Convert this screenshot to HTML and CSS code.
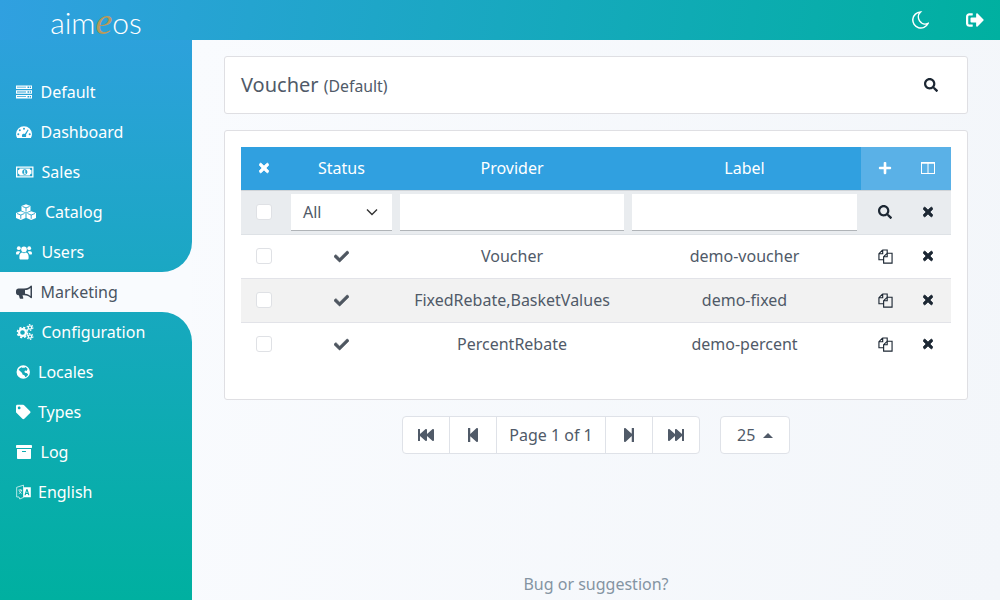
FILE: index.html
```html
<!DOCTYPE html>
<html lang="en">
<head>
<meta charset="utf-8">
<title>Voucher</title>
<link rel="stylesheet" href="styles.css">
</head>
<body>
<header class="topbar">
  <div class="logo">aim<span class="logo-e">e</span>os</div>
  <div class="top-actions">
    <svg class="top-ico" viewBox="0 0 18 18"><path class="moon" d="M9.500 1A8 8 0 1 0 17 12.500 7 7 0 0 1 9.500 1z"/></svg>
    <svg class="top-ico" viewBox="0 0 512 512"><path d="M497 273L329 441c-15 15-41 4.500-41-17v-96H152c-13.300 0-24-10.700-24-24v-96c0-13.300 10.700-24 24-24h136V88c0-21.400 25.900-32 41-17l168 168c9.300 9.400 9.300 24.600 0 34zM192 436v-40c0-6.600-5.400-12-12-12H96c-17.700 0-32-14.300-32-32V160c0-17.700 14.300-32 32-32h84c6.600 0 12-5.400 12-12V76c0-6.600-5.400-12-12-12H96c-53 0-96 43-96 96v192c0 53 43 96 96 96h84c6.600 0 12-5.400 12-12z"/></svg>
  </div>
</header>
<div class="shell">
  <nav class="sidebar">
    <div class="nav-top">
      <a class="nav-item"><span class="nav-ico w25"><svg viewBox="0 0 16 16"><path fill-rule="evenodd" d="M0 1.500h16v3.600H0zM11.500 2.600h1.500v1.400h-1.500zM13.700 2.600h1.300v1.400h-1.300zM1 2.800h9v.8H1zM0 6.200h16v3.600H0zM11.500 7.300h1.500v1.400h-1.500zM13.700 7.300h1.300v1.400h-1.300zM1 7.600h9v.8H1zM0 10.900h16v3.600H0zM11.500 12h1.500v1.400h-1.500zM13.700 12h1.300v1.400h-1.300zM1 12.300h9v.8H1z"/></svg></span>Default</a>
      <a class="nav-item"><span class="nav-ico w25"><svg viewBox="0 0 16 16"><path fill-rule="evenodd" d="M8 2.200A8 8 0 0 0 0 10c0 1.500.4 2.800 1.100 4h13.800c.7-1.200 1.100-2.500 1.100-4a8 8 0 0 0-8-7.800zM8 3.800a1 1 0 1 1 0 2 1 1 0 0 1 0-2zM3.800 5.300a1 1 0 1 1 0 2 1 1 0 0 1 0-2zM2.300 9.300a1 1 0 1 1 0 2 1 1 0 0 1 0-2zM13.700 9.300a1 1 0 1 1 0 2 1 1 0 0 1 0-2zM11.700 5.600l.9.500-2.600 4.600c.4.700.3 1.500-.1 2.300H6.300c-.6-1-.5-2.300.5-3 .7-.4 1.400-.4 2 0z"/></svg></span>Dashboard</a>
      <a class="nav-item"><span class="nav-ico w26"><svg viewBox="0 0 18 16" class="wide"><path fill-rule="evenodd" d="M0 2.500h17.500v11H0zM1.300 3.800v8.400h14.900V3.800zM3.600 4.600h10.300c0 1 .7 1.700 1.600 1.700v3.400c-.9 0-1.600.7-1.600 1.700H3.600c0-1-.7-1.700-1.600-1.700V6.300c.9 0 1.600-.7 1.600-1.700zM8.800 5.200C7.300 5.200 6.200 6.400 6.200 8s1.100 2.800 2.600 2.800 2.600-1.200 2.600-2.800-1.100-2.800-2.600-2.800zM8.200 6.300h1.100v2.700h.6v.8H7.700V9h.5V7.200h-.4z"/></svg></span>Sales</a>
      <a class="nav-item"><span class="nav-ico w29"><svg viewBox="0 0 20 16" class="wider"><path d="M10 .3l4.500 1.700v4.700L10 8.500 5.500 6.700V2z"/><path d="M4.800 7.200l4.700 1.800v5L4.800 16 0 14V9z"/><path d="M15.200 7.200L20 9v5l-4.800 2-4.700-2V9z"/><path class="cut-top" d="M6.500 2.500L10 3.900l3.500-1.400M10 3.900v3.600M1 9.500l3.800 1.500 3.700-1.500M4.800 11v3.800M11.500 9.500l3.700 1.500L19 9.500M15.200 11v3.800"/></svg></span>Catalog</a>
      <a class="nav-item"><span class="nav-ico w26"><svg viewBox="0 0 16 16"><circle cx="2.800" cy="4.200" r="1.900"/><circle cx="13.200" cy="4.200" r="1.900"/><circle cx="8" cy="5.400" r="2.800"/><path d="M0 9.300c0-1.300.7-2.100 1.900-2.100h1.500l.8.700c-.9.600-1.500 1.500-1.700 2.700H.8C.3 10.600 0 10 0 9.300zM16 9.300c0-1.300-.7-2.100-1.900-2.100h-1.500l-.8.700c.9.600 1.500 1.500 1.700 2.700h1.700c.5 0 .8-.6.800-1.300zM3.400 14.200v-1.700c0-2 1.200-3.900 2.900-3.900.6.200 1 .7 1.700.7s1.100-.5 1.700-.7c1.700 0 2.900 1.900 2.900 3.900v1.700c0 .8-.6 1.300-1.300 1.300H4.700c-.7 0-1.300-.5-1.300-1.300z"/></svg></span>Users</a>
    </div>
    <div class="nav-current">
      <a class="nav-item active"><span class="nav-ico w25"><svg viewBox="0 0 16 16"><path fill-rule="evenodd" d="M15.200 1.500c-.4 0-.7.300-.8.500C13 3.400 11.500 4.500 8 4.500H2.500C1.100 4.500 0 5.600 0 7v1.800c0 1.400 1.100 2.400 2.500 2.400h.4l.8 3.100c.1.300.4.500.7.500h2.200c.5 0 .8-.5.700-.9l-.8-2.700H8c3.500 0 5 1.100 6.400 2.500.2.200.5.500.8.500.5 0 .8-.4.800-.8V2.300c0-.5-.3-.8-.8-.8zM14.500 3.900v8c-1.400-1.100-3-1.900-5.500-2.200V6.100c2.500-.3 4.100-1.100 5.500-2.200z"/></svg></span>Marketing</a>
    </div>
    <div class="nav-bottom">
      <a class="nav-item"><span class="nav-ico w26"><svg viewBox="0 0 17 16" class="wide"><circle class="gear" cx="6" cy="8.500" r="3.400"/><circle class="gear-teeth" cx="6" cy="8.500" r="5"/><circle class="gear-s" cx="13.500" cy="3.500" r="1.700"/><circle class="gear-s-teeth" cx="13.500" cy="3.500" r="2.900"/><circle class="gear-s" cx="13.500" cy="12.500" r="1.700"/><circle class="gear-s-teeth" cx="13.500" cy="12.500" r="2.900"/></svg></span>Configuration</a>
      <a class="nav-item"><span class="nav-ico w22"><svg viewBox="0 0 16 16" class="narrow"><path fill-rule="evenodd" d="M8 .6a7.400 7.400 0 1 0 0 14.800A7.400 7.400 0 0 0 8 .6zM10.200 2.600c.8.300 2 1 2.700 2l-.6.900-.4 1.400-1.300-.5-1.300.6.500 1.800 1.800.4 1.100.8.600 1.100c-.6 1.200-1.700 2.200-3 2.700l-.6-1.700-1.100-.9-1.400-.5-.5-1.500L5.300 7.600 3.500 6l-.7-.3c.7-1.300 2-2.500 3.400-3l1 .8.500-.6L9 3.600z"/></svg></span>Locales</a>
      <a class="nav-item"><span class="nav-ico w22"><svg viewBox="0 0 512 512" class="narrow"><path d="M0 252.118V48C0 21.490 21.490 0 48 0h204.118a48 48 0 0 1 33.941 14.059l211.882 211.882c18.745 18.745 18.745 49.137 0 67.882L293.823 497.941c-18.745 18.745-49.137 18.745-67.882 0L14.059 286.059A48 48 0 0 1 0 252.118zM112 64c-26.510 0-48 21.490-48 48s21.490 48 48 48 48-21.490 48-48-21.490-48-48-48z"/></svg></span>Types</a>
      <a class="nav-item"><span class="nav-ico w25"><svg viewBox="0 0 512 512"><path d="M32 448c0 17.700 14.300 32 32 32h384c17.700 0 32-14.300 32-32V160H32v288zm160-212c0-6.600 5.400-12 12-12h104c6.600 0 12 5.400 12 12v8c0 6.600-5.400 12-12 12H204c-6.600 0-12-5.400-12-12v-8zM480 32H32C14.300 32 0 46.300 0 64v48c0 8.800 7.200 16 16 16h480c8.800 0 16-7.200 16-16V64c0-17.700-14.300-32-32-32z"/></svg></span>Log</a>
      <a class="nav-item"><span class="nav-ico w22"><svg viewBox="0 0 16 16" class="lang"><path class="lang-back" d="M.7 3L8 .7v13l-4 1.800-.8-2.200H.7zM2.500 6h4M4.500 5v1M3 9.800c1.500-.5 2.500-2 3-3.800M3.500 7c.5 1.200 1.500 2.200 2.500 2.800"/><path fill-rule="evenodd" d="M8 2.800h7.800v10.700H8zM10.900 5h1.500l1.900 6.500h-1.300l-.4-1.400h-1.900l-.4 1.400H9zM11.600 6.800l-.6 2.200h1.300z"/></svg></span>English</a>
    </div>
  </nav>
  <main class="content">
    <section class="card title-card">
      <h1 class="page-title">Voucher <small class="site">(Default)</small></h1>
      <button class="icon-btn"><svg class="ico-s dark" viewBox="0 0 512 512"><use href="#s"/></svg></button>
    </section>
    <section class="card list-card">
      <table class="list">
        <colgroup><col class="c-check"><col class="c-status"><col class="c-provider"><col class="c-label"><col class="c-act"><col class="c-act"></colgroup>
        <thead>
          <tr class="head">
            <th><svg class="ico-x white" viewBox="0 0 352 512"><use href="#x"/></svg></th>
            <th>Status</th><th>Provider</th><th>Label</th>
            <th class="act act-a"><svg class="ico-s white" viewBox="0 0 448 512"><path d="M416 208H272V64c0-17.670-14.330-32-32-32h-32c-17.670 0-32 14.330-32 32v144H32c-17.670 0-32 14.330-32 32v32c0 17.670 14.330 32 32 32h144v144c0 17.670 14.330 32 32 32h32c17.670 0 32-14.330 32-32V304h144c17.670 0 32-14.330 32-32v-32c0-17.670-14.330-32-32-32z"/></svg></th>
            <th class="act act-b"><svg class="ico-s white" viewBox="0 0 14 14"><path fill-rule="evenodd" d="M0 1h14v12H0zM1 2.800V12h5.500V2.800zM7.500 2.800V12H13V2.800z"/></svg></th>
          </tr>
          <tr class="filter">
            <td><span class="box"></span></td>
            <td><div class="select">All<svg class="chev" viewBox="0 0 12 8"><path d="M1 1.500l5 5 5-5" fill="none" stroke="currentColor" stroke-width="1.400"/></svg></div></td>
            <td><div class="input"></div></td>
            <td><div class="input"></div></td>
            <td class="act-a"><svg class="ico-s dark" viewBox="0 0 512 512"><use href="#s"/></svg></td>
            <td class="act-b"><svg class="ico-x dark" viewBox="0 0 352 512"><use href="#x"/></svg></td>
          </tr>
        </thead>
        <tbody>
          <tr>
            <td><span class="box"></span></td>
            <td><svg class="ico-c grey" viewBox="0 0 512 512"><use href="#c"/></svg></td>
            <td>Voucher</td><td>demo-voucher</td>
            <td class="act-a"><svg class="ico-d dark" viewBox="0 0 16 16"><use href="#d"/></svg></td>
            <td class="act-b"><svg class="ico-x dark" viewBox="0 0 352 512"><use href="#x"/></svg></td>
          </tr>
          <tr class="odd">
            <td><span class="box"></span></td>
            <td><svg class="ico-c grey" viewBox="0 0 512 512"><use href="#c"/></svg></td>
            <td>FixedRebate,BasketValues</td><td>demo-fixed</td>
            <td class="act-a"><svg class="ico-d dark" viewBox="0 0 16 16"><use href="#d"/></svg></td>
            <td class="act-b"><svg class="ico-x dark" viewBox="0 0 352 512"><use href="#x"/></svg></td>
          </tr>
          <tr>
            <td><span class="box"></span></td>
            <td><svg class="ico-c grey" viewBox="0 0 512 512"><use href="#c"/></svg></td>
            <td>PercentRebate</td><td>demo-percent</td>
            <td class="act-a"><svg class="ico-d dark" viewBox="0 0 16 16"><use href="#d"/></svg></td>
            <td class="act-b"><svg class="ico-x dark" viewBox="0 0 352 512"><use href="#x"/></svg></td>
          </tr>
        </tbody>
      </table>
    </section>
    <div class="pager-row">
      <div class="pager">
        <a class="pg"><svg class="ico-p" viewBox="0 0 512 512"><path d="M0 436V76c0-6.600 5.400-12 12-12h40c6.600 0 12 5.400 12 12v151.900L235.500 71.400C256.100 54.300 288 68.600 288 96v131.900L459.500 71.400C480.100 54.300 512 68.600 512 96v320c0 27.400-31.900 41.700-52.500 24.600L288 285.300V416c0 27.400-31.900 41.700-52.500 24.600L64 285.300V436c0 6.600-5.400 12-12 12H12c-6.600 0-12-5.400-12-12z"/></svg></a>
        <a class="pg"><svg class="ico-p" viewBox="0 0 448 512"><path d="M64 468V44c0-6.600 5.400-12 12-12h48c6.600 0 12 5.400 12 12v176.400l195.500-181C352.100 22.300 384 36.600 384 64v384c0 27.400-31.900 41.700-52.500 24.600L136 292.700V468c0 6.600-5.400 12-12 12H76c-6.600 0-12-5.400-12-12z"/></svg></a>
        <span class="pg page">Page 1 of 1</span>
        <a class="pg"><svg class="ico-p" viewBox="0 0 448 512"><path d="M384 44v424c0 6.600-5.400 12-12 12h-48c-6.600 0-12-5.400-12-12V291.600l-195.500 181C95.900 489.700 64 475.400 64 448V64c0-27.400 31.900-41.700 52.500-24.600L312 219.300V44c0-6.600 5.400-12 12-12h48c6.600 0 12 5.400 12 12z"/></svg></a>
        <a class="pg"><svg class="ico-p" viewBox="0 0 512 512"><path d="M512 76v360c0 6.600-5.400 12-12 12h-40c-6.600 0-12-5.400-12-12V284.100L276.500 440.600c-20.600 17.200-52.500 2.800-52.500-24.600V284.100L52.500 440.600C31.900 457.800 0 443.400 0 416V96c0-27.400 31.900-41.700 52.500-24.600L224 226.800V96c0-27.400 31.900-41.700 52.500-24.600L448 226.800V76c0-6.600 5.400-12 12-12h40c6.600 0 12 5.400 12 12z"/></svg></a>
      </div>
      <div class="size">25<span class="caret"></span></div>
    </div>
    <footer class="foot">Bug or suggestion?</footer>
  </main>
</div>
<svg class="defs" aria-hidden="true">
  <defs>
    <path id="x" d="M242.720 256l100.070-100.070c12.280-12.280 12.280-32.190 0-44.480l-22.240-22.240c-12.280-12.280-32.190-12.280-44.480 0L176 189.280 75.930 89.210c-12.280-12.280-32.190-12.280-44.480 0L9.210 111.450c-12.280 12.280-12.280 32.190 0 44.480L109.280 256 9.210 356.070c-12.280 12.280-12.280 32.190 0 44.480l22.240 22.240c12.280 12.280 32.200 12.280 44.480 0L176 322.720l100.070 100.070c12.280 12.280 32.200 12.280 44.480 0l22.240-22.240c12.280-12.280 12.280-32.190 0-44.480L242.720 256z"/>
    <path id="s" d="M505 442.700L405.300 343c-4.500-4.500-10.600-7-17-7H372c27.600-35.300 44-79.700 44-128C416 93.100 322.900 0 208 0S0 93.100 0 208s93.100 208 208 208c48.300 0 92.700-16.400 128-44v16.300c0 6.400 2.500 12.500 7 17l99.700 99.700c9.400 9.400 24.600 9.400 33.900 0l28.300-28.300c9.400-9.400 9.400-24.600.1-34zM208 336c-70.700 0-128-57.200-128-128 0-70.700 57.200-128 128-128 70.700 0 128 57.200 128 128 0 70.700-57.200 128-128 128z"/>
    <path id="c" d="M173.898 439.404l-166.400-166.400c-9.997-9.997-9.997-26.206 0-36.204l36.203-36.204c9.997-9.998 26.207-9.998 36.204 0L192 312.690 432.095 72.596c9.997-9.997 26.207-9.997 36.204 0l36.203 36.204c9.997 9.997 9.997 26.206 0 36.204l-294.400 294.401c-9.998 9.997-26.207 9.997-36.204-.001z"/>
    <path id="d" fill="none" stroke="currentColor" stroke-width="1.200" d="M5 1h4.800v3.500M5 1L1 5v6.500h5M5 1v4H1M9.800 4.500H15V15H6V8.200L9.800 4.500V8.200H6"/>
  </defs>
</svg>
</body>
</html>
```

FILE: styles.css
```css
* { box-sizing: border-box; }
html, body { margin: 0; height: 100%; }
body {
  width: 1000px;
  height: 600px;
  overflow: hidden;
  font-family: "Noto Sans", "Open Sans", sans-serif;
  font-size: 16px;
  color: #505a68;
  background: #f5f7fb;
}
.topbar {
  height: 40px;
  display: flex;
  align-items: center;
  justify-content: space-between;
  background: linear-gradient(100deg, #30a0e0 0%, #00b0a0 100%);
}
.logo {
  width: 192px;
  height: 40px;
  text-align: center;
  color: #fff;
  font-family: "Lato", "Open Sans", sans-serif;
  font-weight: 300;
  font-size: 30px;
  line-height: 44px;
}
.logo-e {
  color: #b89a5c;
  font-family: "Liberation Serif", serif;
  font-style: italic;
  font-size: 38px;
  line-height: 20px;
}
.top-actions { display: flex; gap: 37px; padding-right: 16px; }
.top-ico { width: 18px; height: 18px; fill: #fff; display: block; }
.moon { fill: none; stroke: #fff; stroke-width: 1.500; }
.shell { display: flex; height: 560px; }
.sidebar { width: 192px; flex: none; display: flex; flex-direction: column; background: #f9fbfe; }
.nav-top, .nav-bottom {
  background: linear-gradient(180deg, #30a0e0 0%, #00b0a0 100%) fixed;
}
.nav-top { height: 232px; padding-top: 32px; border-bottom-right-radius: 30px; }
.nav-bottom { flex: 1; border-top-right-radius: 30px; }
.nav-current { height: 40px; }
.nav-item {
  height: 40px;
  display: flex;
  align-items: center;
  padding-left: 16px;
  color: #fff;
  fill: #fff;
}
.nav-item.active { color: #4a5462; fill: #3a4452; }
.nav-ico { flex: none; display: block; }
.nav-ico svg { width: 16px; height: 16px; display: block; }
.nav-ico svg.narrow { width: 14.500px; height: 16px; }
.nav-ico svg.lang { width: 15px; height: 16px; }
.nav-ico svg.wide { width: 18px; height: 16px; }
.nav-ico svg.wider { width: 20px; height: 16px; }
.w25 { width: 24.500px; }
.w26 { width: 25.500px; }
.w29 { width: 29px; }
.w22 { width: 22px; }
.cut-top { fill: none; stroke: #22a3c9; stroke-width: .9; }
.gear { fill: none; stroke: #fff; stroke-width: 2.200; }
.gear-teeth { fill: none; stroke: #fff; stroke-width: 1.600; stroke-dasharray: 2.200 1.730; }
.gear-s { fill: none; stroke: #fff; stroke-width: 1.200; }
.gear-s-teeth { fill: none; stroke: #fff; stroke-width: 1.100; stroke-dasharray: 1.500 1.540; }
.lang-back { fill: none; stroke: #fff; stroke-opacity: .75; stroke-width: 1; }
.content {
  flex: 1;
  min-width: 0;
  padding: 16px 32px 0;
  display: flex;
  flex-direction: column;
  position: relative;
  background: linear-gradient(100deg, #f9fbfe 0%, #f3f6fa 100%);
}
.card {
  background: #fff;
  border: 1px solid #dfdfe3;
  border-radius: 3px;
}
.title-card {
  height: 58px;
  display: flex;
  align-items: center;
  justify-content: space-between;
  padding: 0 29px 0 16px;
}
.page-title { margin: 0; font-size: 20px; font-weight: 400; line-height: 1.2; }
.site { font-size: 15.800px; }
.icon-btn { border: 0; background: none; padding: 0; display: flex; }
.list-card { height: 270px; margin-top: 16px; padding: 16px; }
.list { width: 710px; border-collapse: collapse; table-layout: fixed; text-align: center; }
.c-check { width: 46px; }
.c-status { width: 109px; }
.c-provider { width: 232px; }
.c-label { width: 233px; }
.c-act { width: 45px; }
.list th, .list td { padding: 0 4px; vertical-align: middle; font-weight: 400; }
.list .act-a { padding: 0 3px 0 6px; }
.list .act-b { padding: 0 5px 0 3px; }
.head { height: 43px; background: #30a0e0; color: #fff; }
.head .act { background: #5ab1e7; }
.filter { height: 44px; background: #e9ecef; border-top: 1px solid #d0d4d8; border-bottom: 1px solid #dee2e6; }
.list tbody tr { height: 44px; border-bottom: 1px solid #e2e3e8; }
.list tbody tr:last-child { border-bottom: 0; }
.list .odd { background: #f2f2f2; }
.box {
  display: block;
  width: 16px;
  height: 16px;
  margin: 0 auto;
  background: #fff;
  border: 1px solid #dfe1e5;
  border-radius: 3px;
}
.select, .input { height: 37px; background: #fff; border-bottom: 1px solid #b0b4b8; }
.select {
  display: flex;
  align-items: center;
  justify-content: space-between;
  padding: 0 14px 0 12px;
  color: #505a68;
  text-align: left;
}
.chev { width: 12px; height: 8px; color: #333; display: block; }
.ico-s, .ico-x, .ico-c, .ico-d, .ico-p { display: block; margin: 0 auto; fill: currentColor; }
.ico-s { width: 14px; height: 14px; }
.ico-x { width: 10px; height: 14px; stroke: currentColor; stroke-width: 34; }
.ico-c { width: 15px; height: 15px; stroke: currentColor; stroke-width: 18; }
.ico-d { width: 15px; height: 15px; }
.ico-p { width: 16px; height: 16px; }
.white { color: #fff; }
.dark { color: #1c2733; }
.grey { color: #4f5761; }
.pager-row { display: flex; justify-content: center; gap: 20px; margin-top: 16px; }
.pager, .size {
  height: 38px;
  background: #fff;
  border: 1px solid #dfe2e8;
  border-radius: 4px;
  display: flex;
  align-items: center;
}
.pg {
  width: 47px;
  height: 100%;
  display: flex;
  align-items: center;
  justify-content: center;
  border-left: 1px solid #dfe2e8;
  fill: #505a68;
}
.pg:first-child { border-left: 0; width: 46px; }
.page { width: 109px; }
.size { width: 70px; padding-left: 16px; gap: 8px; }
.caret {
  width: 0;
  height: 0;
  border: 5px solid transparent;
  border-top: 0;
  border-bottom-color: #505a68;
}
.foot { position: absolute; left: 0; right: 0; top: 533px; text-align: center; color: #8494a2; line-height: 22px; }
.defs { position: absolute; width: 0; height: 0; }
```
